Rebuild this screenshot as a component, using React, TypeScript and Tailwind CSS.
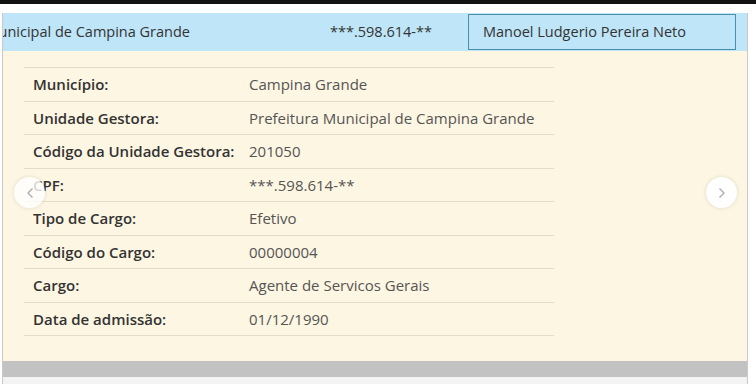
import { ChevronLeft, ChevronRight } from 'lucide-react';

const rows: [string, string][] = [
  ['Município:', 'Campina Grande'],
  ['Unidade Gestora:', 'Prefeitura Municipal de Campina Grande'],
  ['Código da Unidade Gestora:', '201050'],
  ['CPF:', '***.598.614-**'],
  ['Tipo de Cargo:', 'Efetivo'],
  ['Código do Cargo:', '00000004'],
  ['Cargo:', 'Agente de Servicos Gerais'],
  ['Data de admissão:', '01/12/1990'],
];

export default function App() {
  return (
    <div
      className="w-[756px] h-[384px] bg-white overflow-hidden flex flex-col"
      style={{ fontFamily: '"Open Sans", "Noto Sans", sans-serif' }}
    >
      <div className="h-[4px] bg-[#111] shrink-0" />
      <div className="h-[9px] shrink-0" />

      <div className="ml-[2px] w-[746px] border-x border-[#c9c9c9] flex flex-col shrink-0">
        {/* selected grid row */}
        <div className="h-[38px] bg-[#bfe5f8] flex items-center text-[14.5px] text-[#333]">
          <div className="w-[187px] overflow-hidden flex justify-end whitespace-nowrap">
            <span>Municipal de Campina Grande</span>
          </div>
          <div className="ml-[140px] w-[140px] whitespace-nowrap">***.598.614-**</div>
          <div className="ml-[-2px] w-[268px] h-[36px] border border-[#4b8fa8] flex items-center pl-[14px] whitespace-nowrap">
            Manoel Ludgerio Pereira Neto
          </div>
        </div>

        {/* detail panel */}
        <div className="relative h-[310px] bg-[#fdf6e2] pt-[16px] pl-[21px]">
          <div className="w-[530px] border-t border-[#e6dcc6]">
            {rows.map(([label, value]) => (
              <div
                key={label}
                className="h-[33.5px] flex items-center border-b border-[#e6dcc6] text-[15px] whitespace-nowrap"
              >
                <div className="w-[225px] pl-[9px] font-semibold text-[#333]">{label}</div>
                <div className="text-[#555]">{value}</div>
              </div>
            ))}
          </div>

          <div className="absolute left-[11px] top-[126px] w-[31px] h-[31px] rounded-full bg-white/80 shadow-[0_0_4px_rgba(0,0,0,0.12)] flex items-center justify-center text-[#b5b5b5]">
            <ChevronLeft size={16} strokeWidth={2.5} />
          </div>
          <div className="absolute left-[703px] top-[126px] w-[31px] h-[31px] rounded-full bg-white shadow-[0_0_4px_rgba(0,0,0,0.12)] flex items-center justify-center text-[#b5b5b5]">
            <ChevronRight size={16} strokeWidth={2.5} />
          </div>
        </div>

        <div className="h-[16px] bg-[#c2c2c2]" />
      </div>
      <div className="flex-1 ml-[2px] w-[746px] bg-[#f3f3f3] border-x border-[#c9c9c9]" />
    </div>
  );
}
